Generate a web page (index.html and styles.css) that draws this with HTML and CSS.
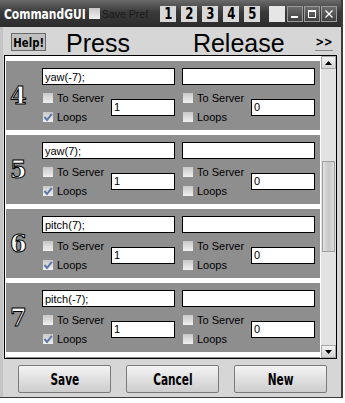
FILE: index.html
```html
<!DOCTYPE html>
<html lang="en">
<head>
    <meta charset="UTF-8">
    <title>CommandGUI</title>
    <link rel="stylesheet" href="styles.css">
</head>
<body>
<div class="window">

    <!-- Title bar -->
    <div class="titlebar">
        <span class="app-title"><span class="narrow">CommandGUI</span></span>
        <span class="cb cb-title"></span>
        <span class="pref-label">Save Pref</span>
        <div class="slots">
            <span class="slot"><span class="narrow">1</span></span>
            <span class="slot"><span class="narrow">2</span></span>
            <span class="slot"><span class="narrow">3</span></span>
            <span class="slot"><span class="narrow">4</span></span>
            <span class="slot"><span class="narrow">5</span></span>
        </div>
        <span class="slot blank"></span>
        <div class="winbtns">
            <span class="winbtn"><svg width="10" height="10" viewBox="0 0 10 10"><rect x="1" y="7" width="7" height="2" fill="#fff"/></svg></span>
            <span class="winbtn"><svg width="10" height="10" viewBox="0 0 10 10"><rect x="1.5" y="1.5" width="7" height="7" fill="none" stroke="#fff" stroke-width="1"/><rect x="1.5" y="1.5" width="7" height="1.5" fill="#fff"/></svg></span>
            <span class="winbtn"><svg width="10" height="10" viewBox="0 0 10 10"><path d="M1.5 1.5 L8.5 8.5 M8.5 1.5 L1.5 8.5" stroke="#fff" stroke-width="1.3"/></svg></span>
        </div>
    </div>

    <div class="main">
        <!-- Column headings -->
        <div class="header">
            <span class="btn-small help"><span class="narrow">Help!</span></span>
            <span class="heading press">Press</span>
            <span class="heading release">Release</span>
            <span class="btn-small more"><span class="narrow">&gt;&gt;</span></span>
        </div>

        <!-- Scrolling list of commands -->
        <div class="panel">
            <div class="rows">
                <div class="row">
                    <div class="num">4</div>
                    <div class="col">
                        <input class="cmd" type="text" value="yaw(-7);">
                        <div class="opts">
                            <div class="checks">
                                <label><span class="cb"></span>To Server</label>
                                <label><span class="cb checked"><svg width="10" height="10" viewBox="0 0 10 10"><path d="M1.5 5 L4 8 L8.8 1.8" fill="none" stroke="#5a78a8" stroke-width="2"/></svg></span>Loops</label>
                            </div>
                            <input class="count" type="text" value="1">
                        </div>
                    </div>
                    <div class="col">
                        <input class="cmd" type="text" value="">
                        <div class="opts">
                            <div class="checks">
                                <label><span class="cb"></span>To Server</label>
                                <label><span class="cb"></span>Loops</label>
                            </div>
                            <input class="count" type="text" value="0">
                        </div>
                    </div>
                </div>

                <div class="row">
                    <div class="num">5</div>
                    <div class="col">
                        <input class="cmd" type="text" value="yaw(7);">
                        <div class="opts">
                            <div class="checks">
                                <label><span class="cb"></span>To Server</label>
                                <label><span class="cb checked"><svg width="10" height="10" viewBox="0 0 10 10"><path d="M1.5 5 L4 8 L8.8 1.8" fill="none" stroke="#5a78a8" stroke-width="2"/></svg></span>Loops</label>
                            </div>
                            <input class="count" type="text" value="1">
                        </div>
                    </div>
                    <div class="col">
                        <input class="cmd" type="text" value="">
                        <div class="opts">
                            <div class="checks">
                                <label><span class="cb"></span>To Server</label>
                                <label><span class="cb"></span>Loops</label>
                            </div>
                            <input class="count" type="text" value="0">
                        </div>
                    </div>
                </div>

                <div class="row">
                    <div class="num">6</div>
                    <div class="col">
                        <input class="cmd" type="text" value="pitch(7);">
                        <div class="opts">
                            <div class="checks">
                                <label><span class="cb"></span>To Server</label>
                                <label><span class="cb checked"><svg width="10" height="10" viewBox="0 0 10 10"><path d="M1.5 5 L4 8 L8.8 1.8" fill="none" stroke="#5a78a8" stroke-width="2"/></svg></span>Loops</label>
                            </div>
                            <input class="count" type="text" value="1">
                        </div>
                    </div>
                    <div class="col">
                        <input class="cmd" type="text" value="">
                        <div class="opts">
                            <div class="checks">
                                <label><span class="cb"></span>To Server</label>
                                <label><span class="cb"></span>Loops</label>
                            </div>
                            <input class="count" type="text" value="0">
                        </div>
                    </div>
                </div>

                <div class="row">
                    <div class="num">7</div>
                    <div class="col">
                        <input class="cmd" type="text" value="pitch(-7);">
                        <div class="opts">
                            <div class="checks">
                                <label><span class="cb"></span>To Server</label>
                                <label><span class="cb checked"><svg width="10" height="10" viewBox="0 0 10 10"><path d="M1.5 5 L4 8 L8.8 1.8" fill="none" stroke="#5a78a8" stroke-width="2"/></svg></span>Loops</label>
                            </div>
                            <input class="count" type="text" value="1">
                        </div>
                    </div>
                    <div class="col">
                        <input class="cmd" type="text" value="">
                        <div class="opts">
                            <div class="checks">
                                <label><span class="cb"></span>To Server</label>
                                <label><span class="cb"></span>Loops</label>
                            </div>
                            <input class="count" type="text" value="0">
                        </div>
                    </div>
                </div>

                <div class="row"></div>
            </div>

            <div class="scrollbar">
                <span class="arrow"><svg width="7" height="4" viewBox="0 0 7 4"><path d="M0 4 L3.5 0 L7 4 Z" fill="#000"/></svg></span>
                <div class="track"><span class="thumb"></span></div>
                <span class="arrow"><svg width="7" height="4" viewBox="0 0 7 4"><path d="M0 0 L3.5 4 L7 0 Z" fill="#000"/></svg></span>
            </div>
        </div>

        <!-- Bottom buttons -->
        <div class="footer">
            <span class="btn"><span class="narrow">Save</span></span>
            <span class="btn"><span class="narrow">Cancel</span></span>
            <span class="btn"><span class="narrow">New</span></span>
        </div>
    </div>
</div>
</body>
</html>
```

FILE: styles.css
```css
body {
    margin: 0;
    background: #fff;
    font-family: 'Liberation Sans', Arial, sans-serif;
}

.window {
    width: 341px;
    border-right: 2px solid #3c3c3c;
    border-bottom: 1px solid #3c3c3c;
}

/* condensed look for the bold labels (no narrow font installed) */
.narrow {
    display: inline-block;
    transform: scaleX(0.78);
    white-space: nowrap;
}

/* Title bar */
.titlebar {
    height: 27px;
    display: flex;
    align-items: center;
    background: linear-gradient(to bottom, #6a6a6a, #3a3a3a 45%, #2c2c2c);
    padding-left: 4px;
    box-sizing: border-box;
    white-space: nowrap;
}

.app-title {
    width: 79px;
    display: flex;
    font-family: 'DejaVu Sans', sans-serif;
    font-weight: bold;
    font-size: 14.5px;
    color: #fff;
    flex-shrink: 0;
}

.app-title .narrow {
    transform: scaleX(0.74);
    transform-origin: left center;
}

.cb {
    display: inline-flex;
    width: 10px;
    height: 10px;
    background: linear-gradient(to bottom, #c8c8c8, #f0f0f0);
    margin-right: 4px;
    flex-shrink: 0;
}

.cb-title {
    width: 11px;
    height: 11px;
    margin-left: 6px;
    margin-right: 2px;
}

.pref-label {
    width: 47px;
    font-size: 10.5px;
    color: #1a1a1a;
    flex-shrink: 0;
}

.slots {
    display: flex;
    gap: 5px;
    margin-left: 11px;
}

.slot {
    width: 16px;
    height: 16px;
    background: #d8d8d8;
    color: #000;
    font-family: 'DejaVu Sans', sans-serif;
    font-weight: bold;
    font-size: 15px;
    display: flex;
    align-items: center;
    justify-content: center;
    flex-shrink: 0;
}

.slot.blank {
    background: #e6e6e6;
    margin-left: 9px;
}

.winbtns {
    display: flex;
    gap: 1px;
    margin-left: 2px;
}

.winbtn {
    width: 14px;
    height: 14px;
    border: 1px solid #9a9a9a;
    background: linear-gradient(to bottom, #6c6c6c, #404040);
    display: flex;
    align-items: center;
    justify-content: center;
}

/* Main area */
.main {
    background: #d6d6d6;
    border-left: 3px solid #c4c4c4;
}

.header {
    height: 28px;
    display: flex;
    align-items: center;
    padding-left: 8px;
}

.btn-small {
    font-family: 'DejaVu Sans', sans-serif;
    font-weight: bold;
    font-size: 13px;
    color: #000;
    display: flex;
    align-items: center;
    justify-content: center;
    height: 16px;
}

.help {
    width: 33px;
    background: #c0c0c0;
    border: 1px solid #6a6a6a;
    margin-top: 2px;
}

.more {
    width: 18px;
    border-bottom: 1px solid #8a8a8a;
    margin-left: 30px;
    margin-top: 2px;
}

.heading {
    font-size: 25px;
    color: #000;
    line-height: 1;
    margin-top: 4px;
}

.press {
    margin-left: 20px;
}

.release {
    margin-left: 63px;
}

/* Scroll panel */
.panel {
    margin-left: 1px;
    width: 331px;
    height: 302px;
    border: 1px solid #000;
    display: flex;
    background: #fff;
}

.rows {
    flex: 1;
    overflow: hidden;
    padding: 5px 1px 0 1px;
    display: flex;
    flex-direction: column;
    gap: 5px;
}

.row {
    flex-shrink: 0;
    height: 69px;
    background: #8e8e8e;
    display: flex;
    align-items: center;
    gap: 7px;
    box-sizing: border-box;
}

.num {
    width: 32px;
    padding-left: 4px;
    font-family: 'DejaVu Serif', 'Liberation Serif', serif;
    font-weight: bold;
    font-size: 24px;
    color: #fff;
    -webkit-text-stroke: 1px #000;
    margin-right: -7px;
}

.col {
    width: 133px;
    display: flex;
    flex-direction: column;
    padding-top: 7px;
    padding-bottom: 4px;
}

input {
    font-family: 'Liberation Sans', Arial, sans-serif;
    font-size: 11px;
    color: #000;
    background: #fff;
    border: 1px solid #000;
    padding: 0 2px;
    margin: 0;
    height: 17px;
    box-sizing: border-box;
    outline: none;
}

.cmd {
    width: 133px;
}

.opts {
    margin-top: 3px;
    display: flex;
    align-items: center;
    justify-content: space-between;
}

.checks {
    display: flex;
    flex-direction: column;
    padding-left: 1px;
}

.checks label {
    height: 19px;
    display: flex;
    align-items: center;
    font-size: 11px;
    color: #000;
}

.count {
    width: 64px;
}

/* Scrollbar */
.scrollbar {
    width: 15px;
    display: flex;
    flex-direction: column;
    background: #e2e2e2;
}

.arrow {
    height: 13px;
    border: 1px solid #a8a8a8;
    background: linear-gradient(to bottom, #f2f2f2, #d4d4d4);
    display: flex;
    align-items: center;
    justify-content: center;
    box-sizing: border-box;
}

.track {
    flex: 1;
    padding-top: 92px;
}

.thumb {
    display: block;
    height: 91px;
    margin: 0 1px;
    border: 1px solid #a0a0a0;
    background: linear-gradient(to right, #e0e0e0, #c8c8c8 50%, #dcdcdc);
    box-sizing: border-box;
}

/* Bottom buttons */
.footer {
    height: 38px;
    display: flex;
    gap: 15px;
    padding-left: 15px;
    padding-top: 6px;
    box-sizing: border-box;
}

.btn {
    width: 93px;
    height: 28px;
    border: 1px solid #7a7a7a;
    border-radius: 2px;
    background: linear-gradient(to bottom, #f4f4f4, #e0e0e0 50%, #cdcdcd);
    box-sizing: border-box;
    display: flex;
    align-items: center;
    justify-content: center;
    font-family: 'DejaVu Sans', sans-serif;
    font-weight: bold;
    font-size: 16px;
    color: #000;
}

.btn .narrow {
    transform: scaleX(0.66);
}
```
